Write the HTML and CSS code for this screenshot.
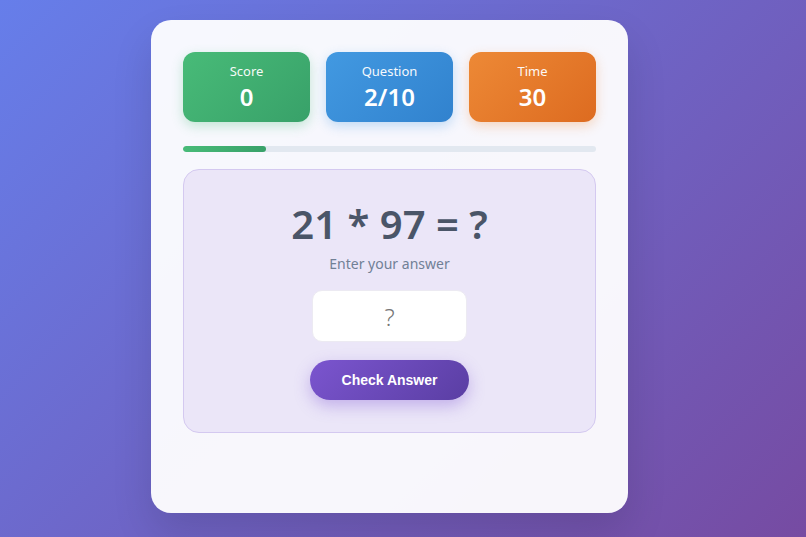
FILE: index.html
```html
<!DOCTYPE html>
<html>
<head>
<meta charset="utf-8">
<link rel="stylesheet" href="styles.css">
</head>
<body>
<div class="card">
  <div class="stats">
    <div class="stat stat-green"><div class="label">Score</div><div class="value">0</div></div>
    <div class="stat stat-blue"><div class="label">Question</div><div class="value">2/10</div></div>
    <div class="stat stat-orange"><div class="label">Time</div><div class="value">30</div></div>
  </div>
  <div class="progress"><div class="fill" style="width:20%"></div></div>
  <div class="qbox">
    <div class="equation">21 * 97 = ?</div>
    <div class="hint">Enter your answer</div>
    <div class="input">?</div>
    <button class="btn">Check Answer</button>
  </div>
</div>
</body>
</html>
```
FILE: styles.css
```css
html, body { margin: 0; height: 100%; }
body {
  background: linear-gradient(135deg, #667eea 0%, #764ba2 100%);
  font-family: "Noto Sans", sans-serif;
  padding: 20px 0 0 151px;
  box-sizing: border-box;
  overflow: hidden;
}
.card {
  width: 477px;
  box-sizing: border-box;
  background: rgba(255,255,255,0.95);
  border-radius: 20px;
  padding: 32px 32px 80px;
  box-shadow: 0 20px 40px rgba(0,0,0,0.12);
}
.stats {
  display: grid;
  grid-template-columns: repeat(3, 1fr);
  gap: 16px;
}
.stat {
  height: 70px;
  border-radius: 12px;
  color: #fff;
  display: flex;
  flex-direction: column;
  align-items: center;
  justify-content: center;
  gap: 3px;
  padding-bottom: 2px;
  box-sizing: border-box;
}
.stat .label { font-size: 13px; line-height: 17px; opacity: 0.95; }
.stat .value { font-size: 24px; font-weight: 600; line-height: 27px; }
.stat-green { background: linear-gradient(135deg, #48bb78, #38a169); box-shadow: 0 4px 12px rgba(72,187,120,0.3); }
.stat-blue { background: linear-gradient(135deg, #4299e1, #3182ce); box-shadow: 0 4px 12px rgba(66,153,225,0.3); }
.stat-orange { background: linear-gradient(135deg, #ed8936, #dd6b20); box-shadow: 0 4px 12px rgba(237,137,54,0.3); }
.progress {
  margin-top: 24px;
  height: 6px;
  background: #e2e8f0;
  border-radius: 3px;
  overflow: hidden;
}
.fill { height: 100%; background: linear-gradient(90deg, #48bb78, #38a169); border-radius: 3px; }
.qbox {
  margin-top: 17px;
  background: #ebe6f8;
  border: 1px solid #d4c9f0;
  border-radius: 16px;
  padding: 32px;
  display: flex;
  flex-direction: column;
  align-items: center;
}
.equation { font-size: 40px; font-weight: 600; line-height: 43px; color: #4a5568; }
.hint { margin-top: 9px; font-size: 14px; line-height: 20px; color: #718096; }
.input {
  margin-top: 16px;
  width: 155px;
  height: 52px;
  background: #fff;
  border-radius: 10px;
  display: flex;
  align-items: center;
  justify-content: center;
  font-size: 24px;
  font-weight: 300;
  color: #777;
  border: 1px solid #eceaf2;
  box-sizing: border-box;
}
.btn {
  margin-top: 18px;
  width: 159px;
  height: 40px;
  border: none;
  border-radius: 20px;
  background: linear-gradient(135deg, #7b55cf, #5a3ea3);
  color: #fff;
  font-family: "Liberation Sans", Arial, sans-serif;
  font-weight: 700;
  font-size: 14px;
  box-shadow: 0 6px 16px rgba(118,75,210,0.35);
}
```
